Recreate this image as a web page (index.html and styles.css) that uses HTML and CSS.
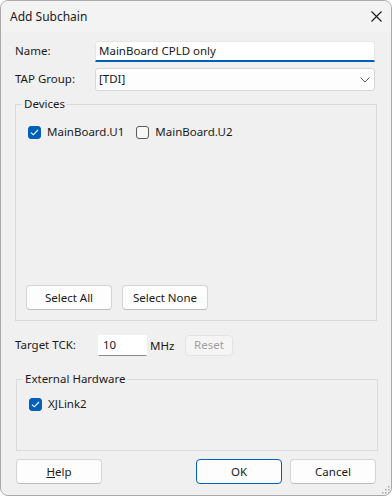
FILE: index.html
```html
<!DOCTYPE html>
<html>
<head>
<meta charset="utf-8">
<link rel="stylesheet" href="styles.css">
</head>
<body>
<div class="window">
  <div class="titlebar">
    <span class="title">Add Subchain</span>
    <svg class="close" width="11" height="11" viewBox="0 0 11 11"><path d="M0.5 0.5 L10.5 10.5 M10.5 0.5 L0.5 10.5" stroke="#1a1a1a" stroke-width="1.1" fill="none"/></svg>
  </div>
  <div class="content">
    <div class="form-row row-name">
      <label class="lbl">Name:</label>
      <div class="textbox focused">MainBoard CPLD only</div>
    </div>
    <div class="form-row row-tap">
      <label class="lbl">TAP Group:</label>
      <div class="combo">
        <span>[TDI]</span>
        <svg class="chev" width="10" height="6" viewBox="0 0 10 6"><path d="M0.5 0.5 L5 5 L9.5 0.5" stroke="#5a5a5a" stroke-width="1" fill="none"/></svg>
      </div>
    </div>

    <fieldset class="group devices">
      <legend>Devices</legend>
      <div class="group-body dev-body">
        <div class="checks">
          <div class="check"><span class="box on"><svg width="9" height="7" viewBox="0 0 9 7"><path d="M1 3.6 L3.3 5.8 L8 1" stroke="#fff" stroke-width="1.1" fill="none"/></svg></span>MainBoard.U1</div>
          <div class="check"><span class="box"></span>MainBoard.U2</div>
        </div>
        <div class="btn-row">
          <button class="btn">Select All</button>
          <button class="btn">Select None</button>
        </div>
      </div>
    </fieldset>

    <div class="tck-row">
      <label class="lbl tck-lbl">Target TCK:</label>
      <div class="textbox small">10</div>
      <span class="unit">MHz</span>
      <button class="btn disabled reset">Reset</button>
    </div>

    <fieldset class="group hw">
      <legend>External Hardware</legend>
      <div class="group-body hw-body">
        <div class="check"><span class="box on"><svg width="9" height="7" viewBox="0 0 9 7"><path d="M1 3.6 L3.3 5.8 L8 1" stroke="#fff" stroke-width="1.1" fill="none"/></svg></span>XJLink2</div>
      </div>
    </fieldset>

    <div class="footer">
      <button class="btn"><u>H</u>elp</button>
      <div class="spacer"></div>
      <button class="btn default">OK</button>
      <button class="btn">Cancel</button>
    </div>
  </div>
  <svg class="grip" width="10" height="10" viewBox="0 0 10 10">
    <rect x="8" y="2" width="1.5" height="1.5" fill="#a8a8a8"/>
    <rect x="5" y="5" width="1.5" height="1.5" fill="#a8a8a8"/>
    <rect x="8" y="5" width="1.5" height="1.5" fill="#a8a8a8"/>
    <rect x="2" y="8" width="1.5" height="1.5" fill="#a8a8a8"/>
    <rect x="5" y="8" width="1.5" height="1.5" fill="#a8a8a8"/>
    <rect x="8" y="8" width="1.5" height="1.5" fill="#a8a8a8"/>
  </svg>
</div>
</body>
</html>
```

FILE: styles.css
```css
* { box-sizing: border-box; }
html, body { margin: 0; padding: 0; background: #ffffff; }
body {
  font-family: "Noto Sans", "Open Sans", sans-serif;
  font-size: 11.5px;
  color: #1a1a1a;
}
.window {
  position: relative;
  width: 392px;
  height: 496px;
  border: 1px solid #a9a9a9;
  border-radius: 8px;
  background: #f0f0f0;
  overflow: hidden;
}
.titlebar {
  height: 31px;
  background: #f3f3f3;
  display: flex;
  align-items: center;
  padding: 0 0 0 9px;
}
.title { flex: 1; font-size: 12px; line-height: 16px; padding-top: 1px; }
.close { margin-right: 9px; }
.content {
  padding: 8px 15px 0 14px;
}
.form-row {
  display: flex;
  align-items: center;
}
.lbl { width: 80px; line-height: 16px; }
.row-name { height: 22px; }
.row-tap { margin-top: 6px; height: 22px; }
.textbox {
  background: #ffffff;
  border: 1px solid #e6e6e6;
  border-bottom: 1px solid #8a8a8a;
  border-radius: 3px;
  line-height: 16px;
  padding: 0 0 0 3px;
  height: 21px;
  display: flex;
  align-items: center;
}
.textbox.focused {
  width: 280px;
  flex: none;
  border-bottom: 2px solid #005fb8;
  border-radius: 3px 3px 0 0;
  padding-top: 1px;
}
.combo {
  width: 280px;
  flex: none;
  height: 23px;
  background: #fdfdfd;
  border: 1px solid #d6d6d6;
  border-radius: 3px;
  display: flex;
  align-items: center;
  justify-content: space-between;
  padding: 0 4px 0 3px;
  line-height: 16px;
}
.chev { margin-top: 1px; }
fieldset.group {
  margin: 0;
  padding: 0;
  border: 1px solid #dadada;
  min-width: 0;
}
fieldset.group legend {
  margin-left: 6px;
  padding: 0 2px;
  line-height: 16px;
}
.devices { margin-top: 6px !important; width: 362px; }
.group-body { display: flex; flex-direction: column; }
.dev-body { height: 208px; padding: 12px 10px 10px 10px; }
.checks { display: flex; }
.check { display: flex; align-items: center; line-height: 16px; margin-right: 10px; }
.box {
  width: 13px;
  height: 13px;
  border-radius: 3px;
  border: 1px solid #5a5a5a;
  background: #f7f7f7;
  margin: 0 6px 0 2px;
  display: flex;
  align-items: center;
  justify-content: center;
}
.box.on { background: #005fb8; border-color: #005fb8; }
.btn-row { margin-top: auto; display: flex; gap: 10px; }
.btn {
  font: inherit;
  color: #1a1a1a;
  width: 86px;
  height: 25px;
  background: #fdfdfd;
  border: 1px solid #d4d4d4;
  border-bottom-color: #bdbdbd;
  border-radius: 4px;
  padding: 0;
  line-height: 16px;
}
.tck-row {
  margin-top: 13px;
  height: 22px;
  display: flex;
  align-items: center;
}
.tck-lbl { width: 83px; }
.textbox.small { width: 49px; border-radius: 0; border-color: #ffffff; border-bottom-color: #8a8a8a; padding-left: 4px; }
.unit { margin-left: 3px; width: 35px; }
.btn.disabled.reset {
  width: 48px;
  height: 21px;
  background: #f5f5f5;
  border-color: #e3e3e3;
  color: #a0a0a0;
}
.hw { margin-top: 15px !important; margin-left: 1px !important; width: 362px; }
.hw-body { height: 63px; padding: 9px 10px 0 10px; }
.footer {
  margin-top: 8px;
  display: flex;
  gap: 8px;
  padding-left: 1px;
}
.spacer { flex: 1; }
.btn.default { border: 1px solid #005fb8; }
.grip { position: absolute; right: 1px; bottom: 1px; }
```
